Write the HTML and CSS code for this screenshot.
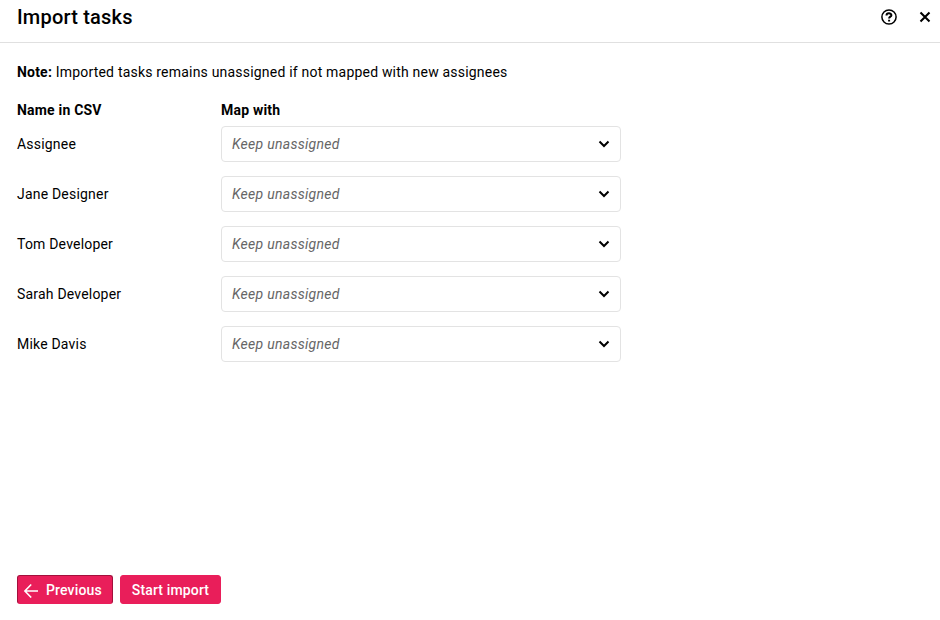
FILE: index.html
```html
<!DOCTYPE html>
<html lang="en">
<head>
  <meta charset="UTF-8">
  <meta name="viewport" content="width=device-width, initial-scale=1.0">
  <title>Import tasks</title>
  <link rel="stylesheet" href="styles.css">
</head>
<body>
  <header class="header">
    <h1>Import tasks</h1>
    <div class="header-actions">
      <button class="icon-button" aria-label="Help">
        <svg width="18" height="18" viewBox="0 0 18 18" fill="none" stroke="#000" stroke-width="1.5">
          <circle cx="9" cy="9" r="7.1"/>
          <path stroke-width="2" d="M6.5 7.4C6.5 4.700 11.400 4.700 11.400 7.200 11.400 8.700 9.100 8.700 9.100 10.500M9.100 11.700v1.900"/>
        </svg>
      </button>
      <button class="icon-button" aria-label="Close">
        <svg width="18" height="18" viewBox="0 0 18 18" fill="none" stroke="#000" stroke-width="2.1">
          <path d="M4.5 4.5l9 9M13.5 4.5l-9 9"/>
        </svg>
      </button>
    </div>
  </header>

  <main class="content">
    <p class="note"><b>Note:</b> Imported tasks remains unassigned if not mapped with new assignees</p>

    <div class="map-head">
      <span class="name">Name in CSV</span>
      <span>Map with</span>
    </div>

    <div class="map-row">
      <span class="name">Assignee</span>
      <div class="select">
        <span>Keep unassigned</span>
        <svg width="12" height="8" viewBox="0 0 12 8"><path d="M1.5 1.5L6 6l4.5-4.5"/></svg>
      </div>
    </div>
    <div class="map-row">
      <span class="name">Jane Designer</span>
      <div class="select">
        <span>Keep unassigned</span>
        <svg width="12" height="8" viewBox="0 0 12 8"><path d="M1.5 1.5L6 6l4.5-4.5"/></svg>
      </div>
    </div>
    <div class="map-row">
      <span class="name">Tom Developer</span>
      <div class="select">
        <span>Keep unassigned</span>
        <svg width="12" height="8" viewBox="0 0 12 8"><path d="M1.5 1.5L6 6l4.5-4.5"/></svg>
      </div>
    </div>
    <div class="map-row">
      <span class="name">Sarah Developer</span>
      <div class="select">
        <span>Keep unassigned</span>
        <svg width="12" height="8" viewBox="0 0 12 8"><path d="M1.5 1.5L6 6l4.5-4.5"/></svg>
      </div>
    </div>
    <div class="map-row">
      <span class="name">Mike Davis</span>
      <div class="select">
        <span>Keep unassigned</span>
        <svg width="12" height="8" viewBox="0 0 12 8"><path d="M1.5 1.5L6 6l4.5-4.5"/></svg>
      </div>
    </div>
  </main>

  <footer class="footer">
    <button class="btn btn-previous">
      <svg width="16" height="16" viewBox="0 0 16 16"><path d="M15 9H2M8.2 2.5L1.9 9l6.3 6.500"/></svg>
      Previous
    </button>
    <button class="btn btn-start">Start import</button>
  </footer>
</body>
</html>
```
FILE: styles.css
```css
* {
  box-sizing: border-box;
  margin: 0;
  padding: 0;
}

body {
  font-family: Roboto, sans-serif;
  font-size: 14px;
  letter-spacing: 0.2px;
  line-height: 20px;
  color: #000;
  background-color: #fff;
  display: flex;
  flex-direction: column;
  height: 100vh;
}

.header {
  display: flex;
  justify-content: space-between;
  height: 43px;
  padding: 5px 6px 0 17px;
  border-bottom: 1px solid #e0e0e0;
}

.header h1 {
  font-size: 20px;
  font-weight: 500;
  line-height: 24px;
  letter-spacing: 0.2px;
}

.header-actions {
  display: flex;
  gap: 18px;
  height: 24px;
  align-items: center;
}

.icon-button {
  display: flex;
  border: none;
  background: none;
}

.content {
  flex: 1;
  padding: 19px 17px 0;
}

.note {
  margin-bottom: 18px;
}

.map-head {
  display: flex;
  font-weight: 700;
  margin-bottom: 6px;
}

.map-row {
  display: flex;
  align-items: center;
  margin-bottom: 14px;
}

.name {
  width: 204px;
}

.select {
  display: flex;
  align-items: center;
  justify-content: space-between;
  width: 400px;
  height: 36px;
  padding: 0 10px;
  border: 1px solid #e3e3e3;
  border-radius: 4px;
  font-style: italic;
  letter-spacing: 0.28px;
  color: #666;
}

.select svg {
  fill: none;
  stroke: #000;
  stroke-width: 2;
}

.footer {
  display: flex;
  gap: 7px;
  padding: 0 17px 16px;
}

.btn {
  display: flex;
  align-items: center;
  justify-content: center;
  height: 29px;
  border: 1px solid #e91e5a;
  border-radius: 3px;
  background-color: #e91e5a;
  color: #fff;
  font: 500 14px/20px Roboto, sans-serif;
  letter-spacing: 0.14px;
}

.btn svg {
  margin-right: 7px;
  fill: none;
  stroke: #fff;
  stroke-width: 1.6;
}

.btn-previous {
  justify-content: flex-start;
  width: 96px;
  padding-left: 5px;
  border-color: #a3103c #a3103c #e91e5a;
}

.btn-start {
  width: 101px;
}
```
